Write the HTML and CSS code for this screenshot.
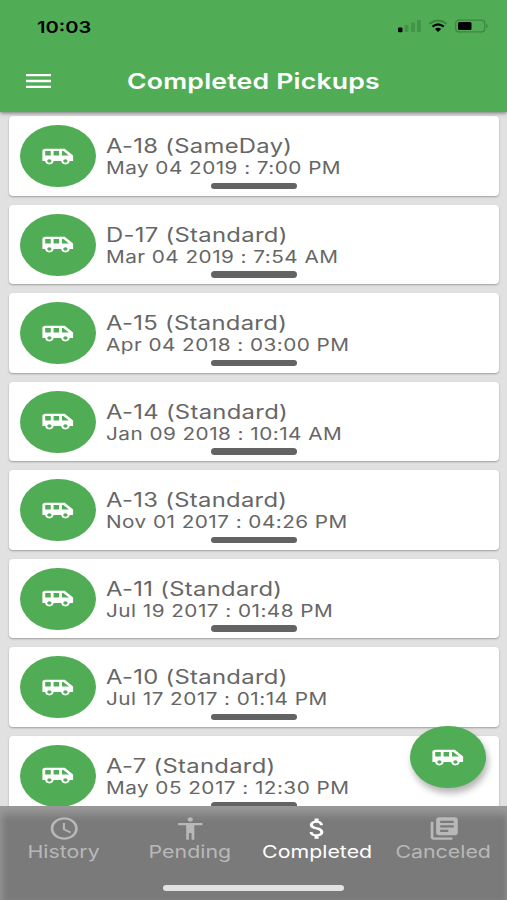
FILE: index.html
```html
<!DOCTYPE html>
<html lang="en">
<head>
<meta charset="utf-8">
<title>Completed Pickups</title>
<link rel="stylesheet" href="styles.css">
</head>
<body>
<svg class="defs" width="0" height="0" aria-hidden="true">
  <symbol id="van" viewBox="0 0 24 24" preserveAspectRatio="none"><path d="M17 5H3c-1.1 0-2 .89-2 2v9h2c0 1.65 1.34 3 3 3s3-1.35 3-3h5.500c0 1.65 1.34 3 3 3s3-1.35 3-3H23v-5l-6-6zM3 11V7h4v4H3zm3 6.500c-.83 0-1.500-.67-1.500-1.500s.67-1.500 1.500-1.500 1.500.67 1.500 1.500-.67 1.500-1.500 1.500zm7-6.500H9V7h4v4zm4.500 6.500c-.83 0-1.500-.67-1.500-1.500s.67-1.500 1.500-1.500 1.500.67 1.500 1.500-.67 1.500-1.500 1.500zM15 11V7h1l4 4h-5z"/></symbol>
</svg>
<div class="app">
  <header class="header">
    <div class="status">
      <span class="time">10:03</span>
      <svg class="indicators" width="92" height="16" viewBox="0 0 92 16">
        <g fill="#429447"><rect x="7.500" y="6" width="4" height="7" rx="1"/><rect x="14" y="3.500" width="4" height="9.500" rx="1"/><rect x="20" y="1" width="4" height="12" rx="1"/></g>
        <rect x="1" y="8.500" width="4.500" height="4.700" rx="1.200"/>
        <path d="M32.500 4.700Q41 -1.600 49.500 4.700" fill="none" stroke="#37843b" stroke-width="2"/>
        <path d="M35.500 7.600Q41 3 46.800 7.600" fill="none" stroke="#000" stroke-width="2.200"/>
        <path d="M38 10Q41 7.600 44.200 10L41 13z"/>
        <rect x="58.700" y="1.200" width="29" height="11.600" rx="3" fill="none" stroke="#3c8640" stroke-width="1.200"/>
        <rect x="61" y="3" width="13.500" height="8" rx="1.500"/>
        <path d="M89.300 4.500Q92.500 7 89.300 9.500z" fill="#3c8640"/>
      </svg>
    </div>
    <div class="toolbar">
      <svg class="menu" width="25" height="14" viewBox="0 0 25 14"><path d="M0 1.200h25M0 7h25M0 12.800h25" stroke="#fff" stroke-width="2.300"/></svg>
      <h1 class="title">Completed Pickups</h1>
    </div>
  </header>
  <main class="list">
    <article class="card"><div class="avatar"><svg class="van"><use href="#van"/></svg></div><div class="info"><h2>A-18 (SameDay)</h2><p>May 04 2019 : 7:00 PM</p></div><i class="grip"></i></article>
    <article class="card"><div class="avatar"><svg class="van"><use href="#van"/></svg></div><div class="info"><h2>D-17 (Standard)</h2><p>Mar 04 2019 : 7:54 AM</p></div><i class="grip"></i></article>
    <article class="card"><div class="avatar"><svg class="van"><use href="#van"/></svg></div><div class="info"><h2>A-15 (Standard)</h2><p>Apr 04 2018 : 03:00 PM</p></div><i class="grip"></i></article>
    <article class="card"><div class="avatar"><svg class="van"><use href="#van"/></svg></div><div class="info"><h2>A-14 (Standard)</h2><p>Jan 09 2018 : 10:14 AM</p></div><i class="grip"></i></article>
    <article class="card"><div class="avatar"><svg class="van"><use href="#van"/></svg></div><div class="info"><h2>A-13 (Standard)</h2><p>Nov 01 2017 : 04:26 PM</p></div><i class="grip"></i></article>
    <article class="card"><div class="avatar"><svg class="van"><use href="#van"/></svg></div><div class="info"><h2>A-11 (Standard)</h2><p>Jul 19 2017 : 01:48 PM</p></div><i class="grip"></i></article>
    <article class="card"><div class="avatar"><svg class="van"><use href="#van"/></svg></div><div class="info"><h2>A-10 (Standard)</h2><p>Jul 17 2017 : 01:14 PM</p></div><i class="grip"></i></article>
    <article class="card"><div class="avatar"><svg class="van"><use href="#van"/></svg></div><div class="info"><h2>A-7 (Standard)</h2><p>May 05 2017 : 12:30 PM</p></div><i class="grip"></i></article>
  </main>
  <div class="fab"><svg class="van"><use href="#van"/></svg></div>
  <footer class="footer">
    <nav class="tabs">
      <div class="tab"><svg viewBox="0 0 24 24" preserveAspectRatio="none"><path d="M11.990 2C6.470 2 2 6.480 2 12s4.470 10 9.990 10C17.520 22 22 17.520 22 12S17.520 2 11.990 2zM12 20c-4.420 0-8-3.580-8-8s3.580-8 8-8 8 3.580 8 8-3.580 8-8 8zm.5-13H11v6l5.250 3.150.75-1.230-4.500-2.670z"/></svg><span>History</span></div>
      <div class="tab"><svg viewBox="0 0 24 24" preserveAspectRatio="none"><path d="M12 2c1.100 0 2 .9 2 2s-.9 2-2 2-2-.9-2-2 .9-2 2-2zm9 7h-6v13h-2v-6h-2v6H9V9H3V7h18v2z"/></svg><span>Pending</span></div>
      <div class="tab active"><svg viewBox="0 0 24 24" preserveAspectRatio="none"><path d="M11.800 10.900c-2.270-.59-3-1.200-3-2.150 0-1.090 1.010-1.850 2.700-1.850 1.780 0 2.440.85 2.500 2.100h2.210c-.07-1.720-1.120-3.300-3.210-3.810V3h-3v2.160c-1.940.42-3.500 1.680-3.500 3.610 0 2.310 1.910 3.460 4.700 4.130 2.500.6 3 1.480 3 2.410 0 .69-.49 1.790-2.700 1.790-2.060 0-2.870-.92-2.980-2.100h-2.200c.12 2.190 1.760 3.420 3.680 3.830V21h3v-2.150c1.950-.37 3.500-1.500 3.500-3.550 0-2.840-2.430-3.810-4.700-4.400z"/></svg><span>Completed</span></div>
      <div class="tab"><svg viewBox="0 0 24 24" preserveAspectRatio="none"><path d="M4 6H2v14c0 1.100.9 2 2 2h14v-2H4V6zm16-4H8c-1.100 0-2 .9-2 2v12c0 1.100.9 2 2 2h12c1.100 0 2-.9 2-2V4c0-1.100-.9-2-2-2zm-1 9H9V9h10v2zm-4 4H9v-2h6v2zm4-8H9V5h10v2z"/></svg><span>Canceled</span></div>
    </nav>
    <div class="home"></div>
  </footer>
</div>
</body>
</html>
```
FILE: styles.css
```css
* { box-sizing: border-box; }
body { margin: 0; font-family: Inter, "Liberation Sans", sans-serif; }
.defs { display: none; }
.app {
  position: relative;
  display: flex;
  flex-direction: column;
  width: 507px;
  height: 900px;
  overflow: hidden;
  background: #e1e1e1;
}
.header {
  flex: none;
  height: 111.500px;
  background: #51ad55;
  box-shadow: 0 1px 4px rgba(0, 0, 0, .5);
  z-index: 1;
}
.status {
  display: flex;
  justify-content: space-between;
  align-items: center;
  height: 52px;
  padding: 2px 18.500px 0 37px;
}
.time { font-size: 16.500px; font-weight: 600; transform: scaleX(1.220); transform-origin: left; }
.indicators { display: block; }
.toolbar { display: flex; align-items: center; height: 57px; padding-left: 26px; }
.menu { flex: none; margin-right: 76px; }
.title {
  margin: 0;
  color: #fff;
  font-size: 21.800px;
  font-weight: 600;
  letter-spacing: .17px;
  white-space: nowrap;
  transform: scaleX(1.220);
  transform-origin: left;
}
.list {
  flex: 1;
  min-height: 0;
  overflow: hidden;
  display: flex;
  flex-direction: column;
  gap: 9px;
  padding: 4.500px 8.500px 0 9px;
}
.card {
  position: relative;
  flex: none;
  display: flex;
  height: 79.500px;
  padding: 9px 11px;
  border-radius: 4px;
  background: #fff;
  box-shadow: 0 1px 2px rgba(0, 0, 0, .3);
}
.avatar, .fab {
  display: flex;
  align-items: center;
  justify-content: center;
  width: 75.500px;
  height: 62px;
  border-radius: 50%;
  background: #51ad55;
}
.avatar { flex: none; }
.van { width: 33.500px; height: 27px; fill: #fff; }
.info { margin: 9px 0 0 10.500px; color: #666; white-space: nowrap; }
.info h2, .info p {
  margin: 0;
  font-weight: 400;
  transform: scaleX(1.220);
  transform-origin: left;
}
.info h2 { font-size: 19.500px; line-height: 24px; letter-spacing: .26px; }
.info p { font-size: 17px; line-height: 20px; letter-spacing: .37px; }
.grip {
  position: absolute;
  left: 202px;
  bottom: 6.500px;
  width: 86px;
  height: 6.500px;
  border-radius: 4px;
  background: #636363;
}
.fab {
  position: absolute;
  right: 21.500px;
  bottom: 112px;
  z-index: 2;
  box-shadow: 2px 5px 7px rgba(0, 0, 0, .3);
}
.footer {
  flex: none;
  height: 94px;
  background: #7a7a7a;
  box-shadow: inset 0 12px 8px -4px #999, inset 6px 0 6px -3px #929292, inset -4px 0 4px -3px #8c8c8c;
}
.tabs { display: grid; grid-template-columns: repeat(4, 1fr); height: 78px; }
.tab {
  display: flex;
  flex-direction: column;
  align-items: center;
  padding-top: 8.500px;
  color: #b8b8b8;
  fill: #b8b8b8;
  font-size: 17.500px;
  line-height: 20px;
}
.tab svg { width: 32.500px; height: 27px; margin-left: 1px; }
.tab span { transform: scaleX(1.220); }
.active { color: #fff; fill: #fff; }
.home { width: 181px; height: 6px; margin: 1px auto 0; border-radius: 3px; background: #e2e2e2; }
```
